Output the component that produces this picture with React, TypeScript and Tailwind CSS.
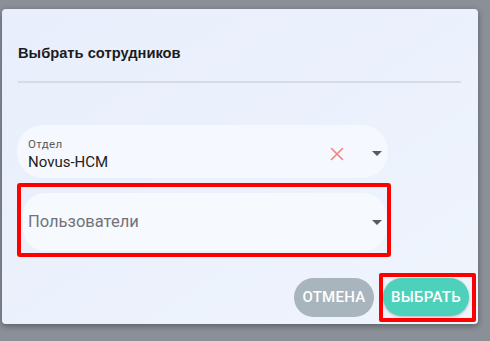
export default function App() {
  return (
    <div
      className="h-[341px] w-[490px] overflow-hidden bg-[#8a8f98] pl-[2px] pt-[9px]"
      style={{ fontFamily: 'Roboto, "Liberation Sans", Arial, sans-serif' }}
    >
      <div className="flex h-[315px] w-[476px] flex-col rounded-[4px] bg-gradient-to-br from-[#e8eefb] to-[#eff4fd] px-[15px] pb-[2px] pt-[35px] shadow-[0_2px_6px_rgba(0,0,0,0.35)]">
        {/* заголовок */}
        <h2 className="pl-[1px] font-['Liberation_Sans',Arial,sans-serif] text-[14.7px] font-bold leading-[18px] text-[#1c1c1c]">
          Выбрать сотрудников
        </h2>
        <div className="mr-[2px] ml-[1px] mt-[19px] h-[2px] bg-[#d6dce6]" />

        {/* Отдел */}
        <div className="mt-[42px] flex h-[53px] w-[371px] items-center rounded-[26px] bg-[#f5f8fe] pl-[11px] pr-[6px]">
          <div className="flex flex-1 flex-col self-start pt-[13px]">
            <span className="text-[11.5px] leading-[13px] tracking-[0.4px] text-[#5a5a5a]">Отдел</span>
            <span className="mt-[2px] text-[15px] leading-[18px] text-[#222]">Novus-HCM</span>
          </div>
          <svg width="14" height="14" viewBox="0 0 14 14" className="mr-[28px] mt-[4px]">
            <path d="M1.5 1.5 L12.5 12.5 M12.5 1.5 L1.5 12.5" stroke="#f2837b" strokeWidth="1.6" strokeLinecap="round" />
          </svg>
          <svg width="10" height="5" viewBox="0 0 10 5" className="mt-[4px]">
            <path d="M0 0 L10 0 L5 5 Z" fill="#555b61" />
          </svg>
        </div>

        {/* Пользователи */}
        <div className="mt-[5px] h-[74px] w-[374px] rounded-[3px] border-4 border-[#ff0000] pb-[2px] pl-[2px] pr-[1px] pt-[6px]">
          <div className="flex h-[58px] items-center rounded-[22px] bg-[#f6f9fe] pl-[5px] pr-[4px]">
            <span className="flex-1 text-[16.5px] text-[#707478]">Пользователи</span>
            <svg width="10" height="5" viewBox="0 0 10 5">
              <path d="M0 0 L10 0 L5 5 Z" fill="#555b61" />
            </svg>
          </div>
        </div>

        {/* кнопки */}
        <div className="-mr-[13px] mt-[16px] flex items-center justify-end">
          <button className="h-[39px] w-[80px] rounded-full bg-[#a9b5bc] text-[15px] font-medium uppercase tracking-[0.3px] text-white">
            Отмена
          </button>
          <div className="ml-[5px] h-[49px] w-[97px] rounded-[2px] border-4 border-[#ff0000] pb-[2px] pr-[3px] pt-[1px]">
            <button className="h-[38px] w-[86px] rounded-full bg-[#4ed1ba] text-[15px] font-medium uppercase tracking-[0.3px] text-white shadow-[0_1px_3px_rgba(0,0,0,0.25)]">
              Выбрать
            </button>
          </div>
        </div>
      </div>
    </div>
  )
}
